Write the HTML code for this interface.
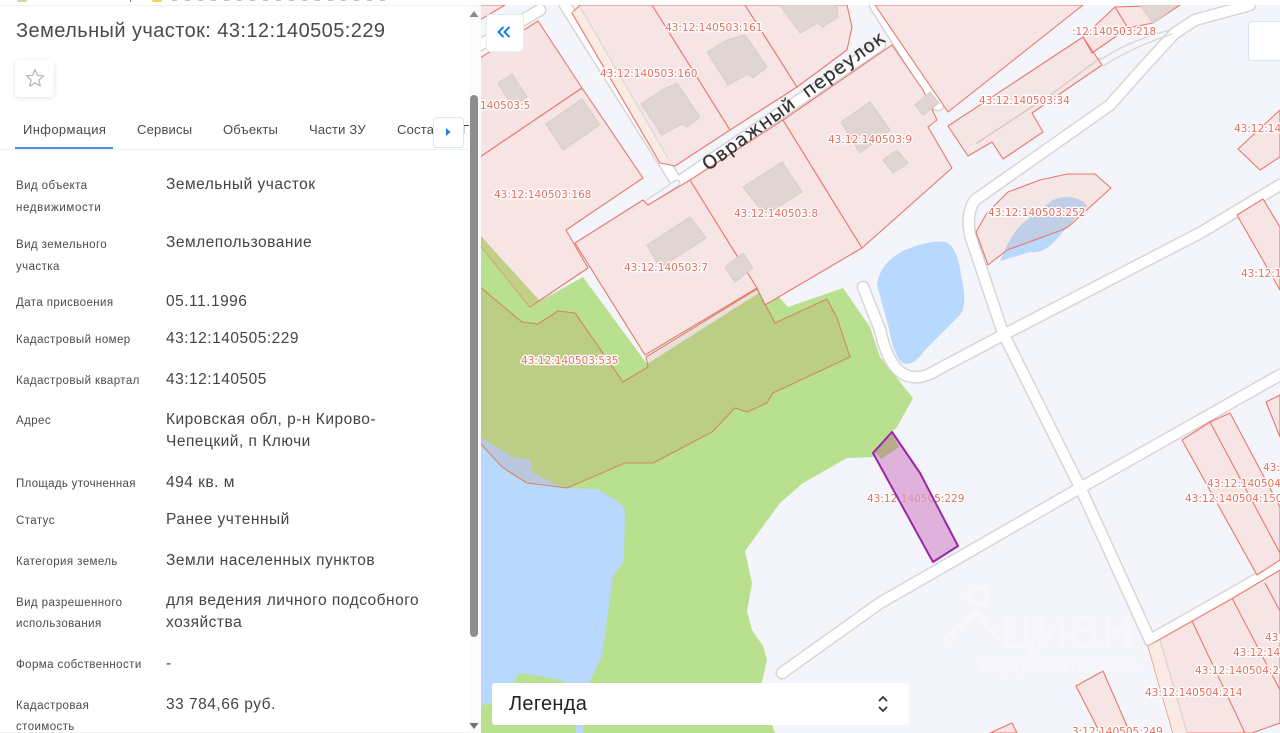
<!DOCTYPE html>
<html lang="ru"><head><meta charset="utf-8"><title>Земельный участок</title>
<style>
html,body{margin:0;padding:0;width:1280px;height:733px;overflow:hidden;background:#fff}
body{position:relative;font-family:"Liberation Sans",sans-serif;color:#454545}
.a{position:absolute;white-space:nowrap}
.l{position:absolute;left:16px;margin-top:1px;font-size:11.5px;line-height:22px;letter-spacing:.42px;color:#4a4a4a;white-space:nowrap}
.v{position:absolute;left:166px;margin-top:2px;font-size:15.5px;line-height:20px;letter-spacing:.5px;color:#444;white-space:nowrap}
.t{position:absolute;top:121px;font-size:13px;line-height:18px;letter-spacing:.2px;color:#4a4a4a;white-space:nowrap}
svg text{font-family:"DejaVu Sans",sans-serif}
.lb text{font-size:10.5px;fill:#e4705f;stroke:#fff;stroke-opacity:.95;stroke-width:2.8px;paint-order:stroke;stroke-linejoin:round}
</style></head><body>

<svg class="a" style="left:481px;top:0;width:799px;height:733px" viewBox="481 0 799 733" width="799" height="733">
<rect x="481" y="0" width="799" height="733" fill="#f4f4fb"/>
<!-- water -->
<polygon points="480,430 650,470 650,733 480,733" fill="#b8d8fd"/>
<path d="M877,285 Q880,262 905,250 Q935,238 948,243 Q958,250 961,275 Q968,305 960,315 Q940,335 925,350 Q913,367 903,363 Q895,360 888,325 Z" fill="#b8d8fd"/>
<path d="M1000,261 Q1010,235 1023,223 L1053,200 Q1073,192 1087,205 L1062,233 Q1045,255 1030,252 Z" fill="#b8d8fd"/>
<!-- green -->
<polygon fill="#b9e08f" points="480,232 538,302 583,277 647,364 762,291 771,288 788,307 843,288 870,327 880,357 913,398 897,427 892,432 873,457 847,458 803,483 780,503 745,551 752,583 747,611 752,630 763,646 767,660 760,690 775,733 587,733 590,681 602,656 613,576 624,561 625,510 620,503 597,489 563,488 533,473 530,460 513,457 480,437"/>
<polygon fill="#b9e08f" points="480,706 500,700 520,673 560,680 600,700 600,733 480,733"/>
<rect x="576" y="722" width="7" height="11" fill="#b8d8fd"/>
<!-- roads casing -->
<g fill="none" stroke-linecap="round" stroke-linejoin="round">
<g stroke="#d6d6d8" stroke-width="13">
<path d="M1250,5 L1195,20 L1175,33 L1150,60 L1110,105 L975,200 Q966,212 970,235 L1003,333 L1080,487 L1150,640"/>
<path d="M863,287 L880,330 Q890,375 913,377 Q925,378 937,370 L1003,335 L1200,233 L1280,185"/>
<path d="M782,673 L880,603 L1080,488 L1280,375"/>
<path d="M1150,640 L1233,593 L1280,566"/>
<path d="M677,183 L880,45"/>
<path d="M565,5 L677,183"/>
<path d="M875,5 L938,105"/>
<path d="M480,45 L540,10"/>
</g>
<g stroke="#fff" stroke-width="10">
<path d="M1250,5 L1195,20 L1175,33 L1150,60 L1110,105 L975,200 Q966,212 970,235 L1003,333 L1080,487 L1150,640"/>
<path d="M863,287 L880,330 Q890,375 913,377 Q925,378 937,370 L1003,335 L1200,233 L1280,185"/>
<path d="M782,673 L880,603 L1080,488 L1280,375"/>
<path d="M1150,640 L1233,593 L1280,566"/>
<path d="M677,183 L880,45"/>
<path d="M565,5 L677,183"/>
<path d="M875,5 L938,105"/>
<path d="M480,45 L540,10"/>
</g>
<path d="M637,210 L677,183" stroke="#d6d6d8" stroke-width="7"/>
<path d="M637,210 L677,183" stroke="#f4f4fb" stroke-width="4.5"/>
<path d="M977,143 L1053,93 L1100,58" stroke="#d6d0cc" stroke-width="1.4"/>
<path d="M1100,60 Q1130,40 1170,30 M1103,66 Q1135,46 1172,34" stroke="#d6d6d8" stroke-width="1.3"/>
</g>
<!-- parcels -->
<g fill="#f7e5e5" stroke="#e9786b" stroke-width="1.1" stroke-linejoin="round">
<polygon points="480,58 538,21 582,88 480,157" fill="#f6e3e3"/>
<polygon points="480,157 582,88 643,178 566,230 588,268 530,307 480,245"/>
<polygon points="575,243 643,200 648,205 690,180 757,288 645,355"/>
<polygon points="690,180 783,120 862,248 765,305 757,288"/>
<polygon points="783,120 892,45 923,90 937,120 928,127 952,168 862,248"/>
<polygon points="875,5 948,112 1083,5"/>
<polygon points="1238,149 1280,110 1280,157 1260,170"/>
<polygon points="1237,215 1263,199 1280,227 1280,290"/>
<polygon points="1182,440 1210,422 1230,413 1280,507 1280,560 1257,575"/>
<polygon points="1266,402 1280,395 1280,437"/>
<polygon points="1076,686 1103,671 1130,733 1100,733"/>
<polygon points="990,733 1012,723 1017,733"/>
<polygon points="480,20 505,5 480,5"/>
</g>
<g fill="#f7e5e5" stroke="#e9786b" stroke-width="1.1" stroke-linejoin="round">
<polygon points="580,5 572,13 660,163 675,166 730,130 652,5"/>
<polygon points="652,5 745,5 797,87 730,130"/>
<polygon points="745,5 847,5 852,27 847,50 797,87"/>
<polygon points="1083,37 1115,7 1128,28 1092,53"/>
<polygon points="1115,7 1180,5 1153,23 1128,28"/>
</g>
<polygon points="572,13 580,7 668,158 660,163" fill="#faebe4"/>
<path d="M580,7 L668,158" stroke="#d8d4d0" stroke-width="1" fill="none"/>
<path d="M572,13 L660,163" stroke="#e9786b" stroke-width="1.1" fill="none"/>
<g fill="rgba(255,138,92,.13)" stroke="#e9786b" stroke-width="1.1" stroke-linejoin="round">
<polygon points="948,126 968,156 992,142 1003,159 1043,132 1032,113 1102,65 1083,37"/>
<polygon points="976,232 987,213 1008,192 1040,180 1067,174 1095,174 1111,188 1068,227 1062,230 1007,250 988,265"/>
</g>
<polygon points="1148,646 1233,598 1280,570 1280,723 1252,733 1173,733" fill="#f7e5e5" stroke="#e9786b" stroke-width="1.1" stroke-linejoin="round"/>
<polygon points="1148,646 1160,640 1187,733 1173,733" fill="#fbeae4"/>
<g fill="none" stroke="#e9786b" stroke-width="1.1">
<path d="M1210,422 L1280,553"/>
<path d="M1160,640 L1187,733" stroke="#d8d0cc"/>
<path d="M1192,621 L1245,733"/>
<path d="M1232,598 L1280,690"/>
<path d="M1265,583 L1280,611"/>
</g>
<!-- buildings -->
<g fill="#e0d5d0" stroke="#d5cdca" stroke-width="1">
<polygon points="641,104 662,90 677,83 700,117 687,127 682,124 662,135"/>
<polygon points="707,52 727,40 745,35 767,67 753,78 748,74 728,85"/>
<polygon points="780,5 837,5 838,17 823,27 818,23 800,33"/>
<polygon points="498,83 512,74 527,97 513,107"/>
<polygon points="546,124 582,99 600,125 563,150"/>
<polygon points="743,187 782,162 802,192 765,215"/>
<polygon points="841,122 870,102 890,130 860,153"/>
<polygon points="915,105 930,92 939,103 923,115"/>
<polygon points="883,160 897,150 908,163 893,173"/>
<polygon points="647,245 690,217 706,238 660,268"/>
<polygon points="725,267 743,253 753,268 735,282"/>
<polygon points="1140,5 1178,5 1153,23"/>
</g>
<polygon points="480,235 539,300 530,307 480,245" fill="#c1cf87"/>
<polygon fill="rgba(205,120,90,.18)" stroke="#d08a5e" stroke-width="1.1" stroke-linejoin="round" points="480,287 522,322 538,324 558,311 575,313 623,382 648,367 646,357 757,289 775,323 827,299 837,318 850,357 773,393 767,403 747,412 735,408 712,432 653,463 625,463 567,488 527,483 502,467 480,443"/>
<!-- labels -->
<g class="lb">
<text x="665" y="31">43:12:140503:161</text>
<text x="600" y="77">43:12:140503:160</text>
<text x="480" y="109">140503:5</text>
<text x="494" y="198">43:12:140503:168</text>
<text x="734" y="217">43:12:140503:8</text>
<text x="828" y="143">43:12:140503:9</text>
<text x="1072" y="35">:12:140503:218</text>
<text x="979" y="104">43:12:140503:34</text>
<text x="988" y="216">43:12:140503:252</text>
<text x="1234" y="132">43:12:140503:1</text>
<text x="1241" y="277">43:12:140503:1</text>
<text x="624" y="271">43:12:140503:7</text>
<text x="521" y="364">43:12:140503:535</text>
<text x="867" y="502">43:12:140505:229</text>
<text x="1263" y="471">43:12:140504</text>
<text x="1207" y="487">43:12:140504:1</text>
<text x="1185" y="502">43:12:140504:150</text>
<text x="1265" y="641">43:12:140504</text>
<text x="1233" y="656">43:12:140504:2</text>
<text x="1195" y="674">43:12:140504:24</text>
<text x="1145" y="696">43:12:140504:214</text>
<text x="1072" y="735">3:12:140505:249</text>
</g>
<!-- target -->
<polygon points="892,432 873,453 933,562 958,546 920,473" fill="rgba(215,153,207,.72)"/>
<polygon points="892,434 875,452 881,459 899,447" fill="#b8a98a"/>
<path d="M892,432 L873,453 L933,562 L958,546 L920,473 Z" fill="none" stroke="#9a27a8" stroke-width="2" stroke-linejoin="round"/>
<!-- street -->
<text x="794" y="107" transform="rotate(-36.2 794 101)" text-anchor="middle" font-size="18.5" letter-spacing=".8" fill="#333" stroke="#333" stroke-width=".2" xml:space="preserve">Овражный  переулок</text>
<!-- watermark -->
<text x="1000" y="648" font-size="60" fill="#f6f6fc" style="font-family:'Liberation Sans',sans-serif">циан</text>
<text x="980" y="672" font-size="24" fill="#f6f6fc" style="font-family:'Liberation Sans',sans-serif">недвижимость</text>
<circle cx="978" cy="596" r="9" fill="none" stroke="#f7f7fc" stroke-width="5"/>
<path d="M945,640 L975,612 L1000,640" fill="none" stroke="#f7f7fc" stroke-width="5"/>
<rect x="481" y="0" width="799" height="5" fill="#fff"/>
</svg>

<!-- map controls -->
<div class="a" style="left:486px;top:14px;width:36px;height:36px;background:#fff;border:1px solid #e4ecf6;border-radius:4px"></div>
<svg class="a" style="left:496px;top:24px" width="16" height="16" viewBox="0 0 16 16"><path d="M7.5,3 L2.5,8 L7.5,13 M13.5,3 L8.5,8 L13.5,13" fill="none" stroke="#1a7fe0" stroke-width="2"/></svg>
<div class="a" style="left:1248px;top:21px;width:40px;height:38px;background:#fff;border:1px solid #dbe6f5;border-radius:4px"></div>
<div class="a" style="left:492px;top:683px;width:417px;height:42px;background:#fff;border-radius:3px"></div>
<div class="a" style="left:509px;top:692px;font-size:20px;line-height:24px;letter-spacing:.3px;color:#222">Легенда</div>
<svg class="a" style="left:876px;top:694px" width="14" height="20" viewBox="0 0 14 20"><path d="M3,7 L7,3 L11,7 M3,13 L7,17 L11,13" fill="none" stroke="#2b2b2b" stroke-width="1.6"/></svg>

<!-- left panel -->
<div class="a" style="left:0;top:0;width:481px;height:733px;background:#fff;overflow:hidden">
  <div class="a" style="left:0;top:5px;width:481px;height:1px;background:#f1f1f1"></div>
  <div class="a" style="left:17px;top:0;width:10px;height:2px;background:#cfd7a8;border-radius:0 0 4px 4px"></div>
  <div class="a" style="left:152px;top:0;width:10px;height:2px;background:#f1d35c;border-radius:0 0 4px 4px"></div>
  <div class="a" style="left:130px;top:0;width:1px;height:2px;background:#777"></div>
  <div class="a" style="left:172px;top:0;width:215px;height:1px;background:repeating-linear-gradient(90deg,#888 0 5px,transparent 5px 13px);opacity:.5"></div>

  <div class="a" style="left:16px;top:19px;font-size:20px;line-height:24px;letter-spacing:.43px;color:#4a4a4a">Земельный участок: 43:12:140505:229</div>

  <div class="a" style="left:15px;top:60px;width:39px;height:37px;background:#fff;border-radius:4px;box-shadow:0 1px 4px rgba(0,0,0,.12)"></div>
  <svg class="a" style="left:25px;top:68px" width="20" height="20" viewBox="0 0 20 20"><path d="M10,1.6 L12.4,7.4 L18.6,7.9 L13.9,12 L15.3,18.1 L10,14.9 L4.7,18.1 L6.1,12 L1.4,7.9 L7.6,7.4 Z" fill="none" stroke="#b9b9b9" stroke-width="1.3" stroke-linejoin="round"/></svg>

  <div class="t" style="left:23px;letter-spacing:.37px">Информация</div>
  <div class="t" style="left:137px">Сервисы</div>
  <div class="t" style="left:223px">Объекты</div>
  <div class="t" style="left:309px">Части ЗУ</div>
  <div class="t" style="left:397px">Состав</div>
  <div class="t" style="left:462px">П</div>
  <div class="a" style="left:0;top:149px;width:468px;height:1px;background:#eef0f4"></div>
  <div class="a" style="left:15px;top:147px;width:98px;height:2px;background:#4a90e2"></div>
  <div class="a" style="left:433px;top:117px;width:29px;height:29px;background:#fff;border:1px solid #dbe6f8;border-radius:4px"></div>
  <svg class="a" style="left:444px;top:127px" width="8" height="10" viewBox="0 0 8 10"><path d="M2,1 L6.5,5 L2,9 Z" fill="#1a7fe0"/></svg>

  <div class="l" style="top:174px">Вид объекта</div><div class="l" style="top:196px;letter-spacing:.65px">недвижимости</div>
  <div class="v" style="top:173px">Земельный участок</div>
  <div class="l" style="top:233px">Вид земельного</div><div class="l" style="top:255px">участка</div>
  <div class="v" style="top:231px">Землепользование</div>
  <div class="l" style="top:291px">Дата присвоения</div>
  <div class="v" style="top:290px">05.11.1996</div>
  <div class="l" style="top:328px">Кадастровый номер</div>
  <div class="v" style="top:327px">43:12:140505:229</div>
  <div class="l" style="top:369px">Кадастровый квартал</div>
  <div class="v" style="top:368px">43:12:140505</div>
  <div class="l" style="top:409px">Адрес</div>
  <div class="v" style="top:408px">Кировская обл, р-н Кирово-</div>
  <div class="v" style="top:430px">Чепецкий, п Ключи</div>
  <div class="l" style="top:472px;letter-spacing:.3px">Площадь уточненная</div>
  <div class="v" style="top:471px">494 кв. м</div>
  <div class="l" style="top:509px">Статус</div>
  <div class="v" style="top:508px">Ранее учтенный</div>
  <div class="l" style="top:550px">Категория земель</div>
  <div class="v" style="top:549px">Земли населенных пунктов</div>
  <div class="l" style="top:591px">Вид разрешенного</div><div class="l" style="top:612px">использования</div>
  <div class="v" style="top:589px">для ведения личного подсобного</div>
  <div class="v" style="top:611px">хозяйства</div>
  <div class="l" style="top:653px">Форма собственности</div>
  <div class="v" style="top:652px">-</div>
  <div class="l" style="top:694px">Кадастровая</div><div class="l" style="top:715px">стоимость</div>
  <div class="v" style="top:693px">33 784,66 руб.</div>

  <!-- scrollbar -->
  <div class="a" style="left:469px;top:6px;width:12px;height:727px;background:#fbfbfb"></div>
  <div class="a" style="left:470px;top:95px;width:8px;height:542px;background:#8e8e8e;border-radius:4px"></div>
  <svg class="a" style="left:469px;top:10px" width="10" height="8" viewBox="0 0 10 8"><path d="M5,1 L9.5,7 L0.5,7 Z" fill="#8a8a8a"/></svg>
  <svg class="a" style="left:469px;top:722px" width="10" height="8" viewBox="0 0 10 8"><path d="M0.5,1 L9.5,1 L5,7 Z" fill="#6e6e6e"/></svg>
  <div class="a" style="left:0;top:732px;width:469px;height:1px;background:#f0f0f0"></div>
</div>
</body></html>
